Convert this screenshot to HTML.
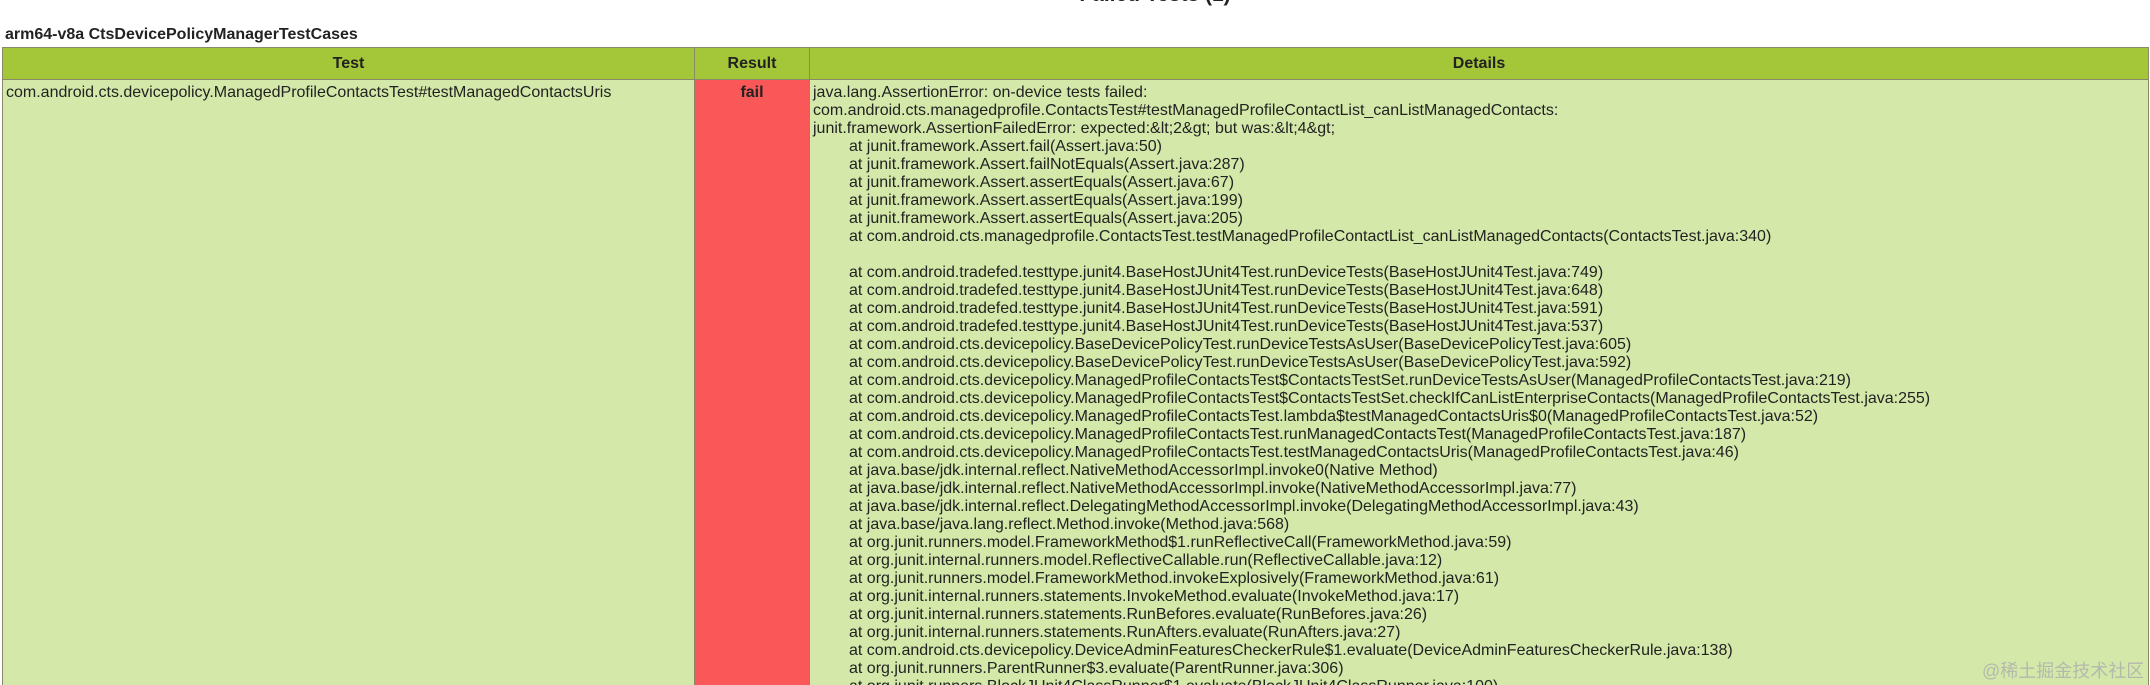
<!DOCTYPE html>
<html><head><meta charset="utf-8"><style>
html,body{margin:0;padding:0;width:2150px;height:685px;overflow:hidden}
body{background:#fff;font-family:"Liberation Sans",sans-serif;color:#222}
#w{position:relative;width:2150px;height:685px;overflow:hidden}
h1{position:absolute;top:-17px;left:0;width:2310px;text-align:center;font-size:21px;margin:0;font-weight:bold}
h2{position:absolute;top:26px;left:5px;font-size:16px;margin:0;font-weight:bold}
table{position:absolute;top:47px;left:2px;width:2147px;border-collapse:collapse;font-size:16px}
th{background:#a4c639;border:1px solid #8a8a6a;height:31px;font-weight:bold;padding:0;color:#222}
td{background:#d4e9a9;border:1px solid #8a8a6a;vertical-align:top;padding:4px 3px 2px;line-height:18px}
td.f{background:#fa5858;text-align:center;font-weight:bold}
.d div{white-space:pre}
.i{padding-left:36px}
.wm{position:absolute;left:1982px;top:657px;font-size:18px;color:#b4b9ac;font-family:"Liberation Sans","Noto Sans CJK SC",sans-serif}
</style></head><body><div id="w">
<h1>Failed Tests (1)</h1>
<h2>arm64-v8a CtsDevicePolicyManagerTestCases</h2>
<table>
<tr><th style="width:691px">Test</th><th style="width:114px">Result</th><th>Details</th></tr>
<tr><td>com.android.cts.devicepolicy.ManagedProfileContactsTest#testManagedContactsUris</td><td class="f">fail</td><td class="d">
<div>java.lang.AssertionError: on-device tests failed:</div>
<div>com.android.cts.managedprofile.ContactsTest#testManagedProfileContactList_canListManagedContacts:</div>
<div>junit.framework.AssertionFailedError: expected:&amp;lt;2&amp;gt; but was:&amp;lt;4&amp;gt;</div>
<div class="i">at junit.framework.Assert.fail(Assert.java:50)</div>
<div class="i">at junit.framework.Assert.failNotEquals(Assert.java:287)</div>
<div class="i">at junit.framework.Assert.assertEquals(Assert.java:67)</div>
<div class="i">at junit.framework.Assert.assertEquals(Assert.java:199)</div>
<div class="i">at junit.framework.Assert.assertEquals(Assert.java:205)</div>
<div class="i">at com.android.cts.managedprofile.ContactsTest.testManagedProfileContactList_canListManagedContacts(ContactsTest.java:340)</div>
<div>&nbsp;</div>
<div class="i">at com.android.tradefed.testtype.junit4.BaseHostJUnit4Test.runDeviceTests(BaseHostJUnit4Test.java:749)</div>
<div class="i">at com.android.tradefed.testtype.junit4.BaseHostJUnit4Test.runDeviceTests(BaseHostJUnit4Test.java:648)</div>
<div class="i">at com.android.tradefed.testtype.junit4.BaseHostJUnit4Test.runDeviceTests(BaseHostJUnit4Test.java:591)</div>
<div class="i">at com.android.tradefed.testtype.junit4.BaseHostJUnit4Test.runDeviceTests(BaseHostJUnit4Test.java:537)</div>
<div class="i">at com.android.cts.devicepolicy.BaseDevicePolicyTest.runDeviceTestsAsUser(BaseDevicePolicyTest.java:605)</div>
<div class="i">at com.android.cts.devicepolicy.BaseDevicePolicyTest.runDeviceTestsAsUser(BaseDevicePolicyTest.java:592)</div>
<div class="i">at com.android.cts.devicepolicy.ManagedProfileContactsTest$ContactsTestSet.runDeviceTestsAsUser(ManagedProfileContactsTest.java:219)</div>
<div class="i">at com.android.cts.devicepolicy.ManagedProfileContactsTest$ContactsTestSet.checkIfCanListEnterpriseContacts(ManagedProfileContactsTest.java:255)</div>
<div class="i">at com.android.cts.devicepolicy.ManagedProfileContactsTest.lambda$testManagedContactsUris$0(ManagedProfileContactsTest.java:52)</div>
<div class="i">at com.android.cts.devicepolicy.ManagedProfileContactsTest.runManagedContactsTest(ManagedProfileContactsTest.java:187)</div>
<div class="i">at com.android.cts.devicepolicy.ManagedProfileContactsTest.testManagedContactsUris(ManagedProfileContactsTest.java:46)</div>
<div class="i">at java.base/jdk.internal.reflect.NativeMethodAccessorImpl.invoke0(Native Method)</div>
<div class="i">at java.base/jdk.internal.reflect.NativeMethodAccessorImpl.invoke(NativeMethodAccessorImpl.java:77)</div>
<div class="i">at java.base/jdk.internal.reflect.DelegatingMethodAccessorImpl.invoke(DelegatingMethodAccessorImpl.java:43)</div>
<div class="i">at java.base/java.lang.reflect.Method.invoke(Method.java:568)</div>
<div class="i">at org.junit.runners.model.FrameworkMethod$1.runReflectiveCall(FrameworkMethod.java:59)</div>
<div class="i">at org.junit.internal.runners.model.ReflectiveCallable.run(ReflectiveCallable.java:12)</div>
<div class="i">at org.junit.runners.model.FrameworkMethod.invokeExplosively(FrameworkMethod.java:61)</div>
<div class="i">at org.junit.internal.runners.statements.InvokeMethod.evaluate(InvokeMethod.java:17)</div>
<div class="i">at org.junit.internal.runners.statements.RunBefores.evaluate(RunBefores.java:26)</div>
<div class="i">at org.junit.internal.runners.statements.RunAfters.evaluate(RunAfters.java:27)</div>
<div class="i">at com.android.cts.devicepolicy.DeviceAdminFeaturesCheckerRule$1.evaluate(DeviceAdminFeaturesCheckerRule.java:138)</div>
<div class="i">at org.junit.runners.ParentRunner$3.evaluate(ParentRunner.java:306)</div>
<div class="i">at org.junit.runners.BlockJUnit4ClassRunner$1.evaluate(BlockJUnit4ClassRunner.java:100)</div>
<div class="i">at org.junit.runners.ParentRunner.runLeaf(ParentRunner.java:366)</div>
</td></tr>
</table>
<div class="wm">@稀土掘金技术社区</div>
</div></body></html>
